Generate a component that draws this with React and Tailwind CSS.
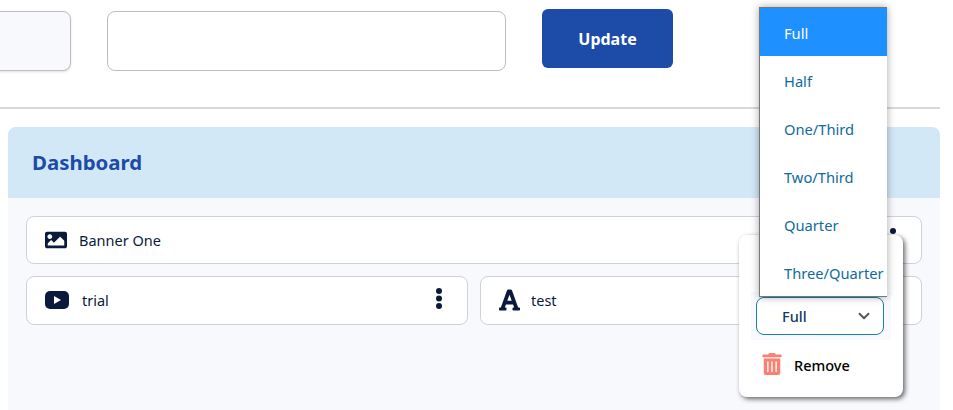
import React from "react";
import { FaImage, FaFont, FaTrashAlt } from "react-icons/fa";
import { ChevronDown } from "lucide-react";

const Dots = ({ className = "" }) => (
  <svg width="8" height="24" viewBox="0 0 8 24" className={className} fill="#0b1a3c">
    <circle cx="4" cy="4" r="3" />
    <circle cx="4" cy="11.5" r="3" />
    <circle cx="4" cy="19" r="3" />
  </svg>
);

const options = ["Full", "Half", "One/Third", "Two/Third", "Quarter", "Three/Quarter"];

const Card = ({ icon, label, gap, height }) => (
  <div className={`${height} bg-white border border-[#cfd2d8] rounded-[8px] flex items-center pl-[18px] pr-6 text-[14.5px] text-[#0b1a3c]`}>
    {icon}
    <span className={gap}>{label}</span>
    <Dots className="ml-auto mb-[3px]" />
  </div>
);

export default function App() {
  return (
    <div className="relative w-[953px] h-[410px] overflow-hidden bg-white font-['Noto_Sans',sans-serif]">
      <div className="w-[940px] h-[109px] border-b-2 border-[#d9d9d9] flex items-start">
        <div className="mt-[11px] ml-[-60px] w-[131px] h-[60px] bg-[#f8f9fd] border border-[#bdbdc2] rounded-[8px] shadow-sm" />
        <div className="mt-[11px] ml-[36px] w-[399px] h-[60px] bg-white border border-[#bdbdbd] rounded-[8px]" />
        <button className="mt-[9px] ml-[36px] w-[131px] h-[59px] bg-[#1c4ba8] rounded-[6px] text-white font-bold text-[16px]">Update</button>
      </div>

      <div className="ml-2 mt-[18px] w-[932px] h-[283px] bg-[#f7f9fd] rounded-t-[8px] overflow-hidden">
        <div className="h-[71px] bg-[#d3e8f7] flex items-center pl-6 text-[#1c4ba8] font-bold text-[20.4px]">Dashboard</div>
        <div className="px-[18px] pt-[18px] flex flex-col gap-3">
          <Card height="h-[48px]" label="Banner One" gap="ml-3 mt-[2px]" icon={<FaImage size={22} color="#0b1a3c" />} />
          <div className="grid grid-cols-2 gap-3">
            <Card height="h-[49px]" label="trial" gap="ml-[13px]" icon={<span className="flex w-6 h-[18px] mb-[2px] rounded-[5px] bg-[#0b1a3c] items-center justify-center"><svg width="7" height="8" viewBox="0 0 7 8" fill="#fff"><path d="M0 0l7 4-7 4z" /></svg></span>} />
            <Card height="h-[49px]" label="test" gap="ml-[11px]" icon={<FaFont size={24} color="#0b1a3c" className="mb-[2px] w-[21px]" />} />
          </div>
        </div>
      </div>

      <div className="absolute left-[739px] top-[235px] w-[164px] h-[162px] bg-white rounded-[8px] shadow-[2px_2px_5px_rgba(0,0,0,0.6)]">
        <div className="absolute left-[12px] top-[57px] w-[140px] h-[48px] bg-[#f7f9fd] flex items-center pl-[5px]">
          <div className="w-[128px] h-[38px] bg-white border border-[#1a7fb0] rounded-[8px] flex items-center justify-between pl-[25px] pr-[10px] text-[14.5px] font-medium text-[#14395b]">
            <span className="mt-[2px]">Full</span>
            <ChevronDown size={18} strokeWidth={2.5} color="#555" />
          </div>
        </div>
        <div className="absolute left-[22px] top-[117px] flex items-center gap-[11px] text-[14.5px] font-medium text-black">
          <FaTrashAlt size={22} color="#fb8072" />
          <span className="mt-[3px]">Remove</span>
        </div>
      </div>

      <div className="absolute left-[759px] top-[7px] w-[128px] h-[290px] flex flex-col bg-white border-l border-t border-b border-[#777777] shadow-[0_0_8px_rgba(0,0,0,0.35)] text-[14.7px] text-[#0f6b9c]">
        {options.map((o, i) => (
          <div key={o} className={`h-[48px] flex items-center pl-6 pt-[2px] whitespace-nowrap ${i === 0 ? "bg-[#1e90ff] text-white" : ""}`}>{o}</div>
        ))}
      </div>
    </div>
  );
}
